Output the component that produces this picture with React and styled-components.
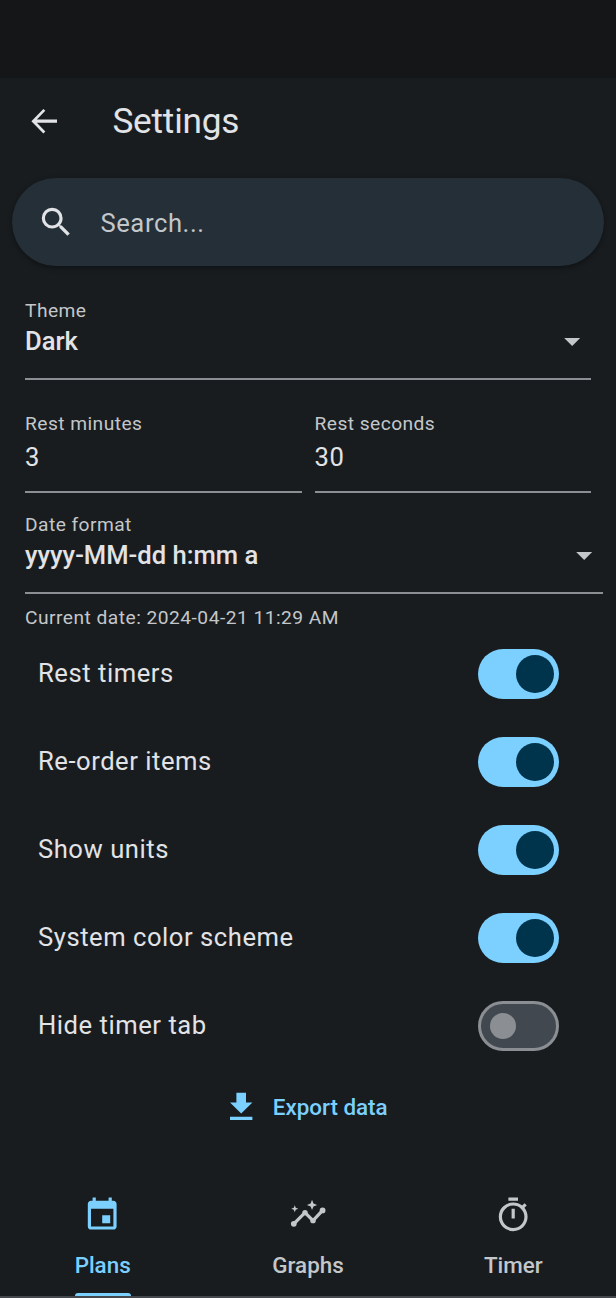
import React from 'react';
import styled, { createGlobalStyle } from 'styled-components';

const GlobalStyle = createGlobalStyle`
  html, body {
    margin: 0;
    background: #181c1f;
  }
  * {
    box-sizing: border-box;
  }
`;

const Icon = ({ d, size = 38.4, color = '#e2e3e6' }) => (
  <svg width={size} height={size} viewBox="0 0 24 24" fill={color} style={{ display: 'block', flexShrink: 0 }}>
    <path d={d} />
  </svg>
);

const paths = {
  back: 'M20 11H7.4l5.3-5.5-1.2-1.2L4 12l7.5 7.7 1.2-1.2L7.4 13H20z',
  search:
    'M9.5,3A6.5,6.5 0 0,1 16,9.5C16,11.11 15.41,12.59 14.44,13.73L14.71,14H15.5L20.5,19L19,20.5L14,15.5V14.71L13.73,14.44C12.59,15.41 11.11,16 9.5,16A6.5,6.5 0 0,1 3,9.5A6.5,6.5 0 0,1 9.5,3M9.5,5C7,5 5,7 5,9.5C5,12 7,14 9.5,14C12,14 14,12 14,9.5C14,7 12,5 9.5,5Z',
  menuDown: 'M7,10L12,15L17,10H7Z',
  download: 'M5,20H19V18H5M19,9H15V3H9V9H5L12,16L19,9Z',
  event:
    'M17 12h-5v5h5v-5zM16 1v2H8V1H6v2H5c-1.11 0-1.99.9-1.99 2L3 19c0 1.1.89 2 2 2h14c1.1 0 2-.9 2-2V5c0-1.1-.9-2-2-2h-1V1h-2zm3 18H5V8h14v11z',
  timer:
    'M12,20A7,7 0 0,1 5,13A7,7 0 0,1 12,6A7,7 0 0,1 19,13A7,7 0 0,1 12,20M19.03,7.39L20.45,5.97C20,5.46 19.55,5 19.04,4.56L17.62,6C16.07,4.74 14.12,4 12,4A9,9 0 0,0 3,13A9,9 0 0,0 12,22C17,22 21,17.97 21,13C21,10.88 20.26,8.93 19.03,7.39M11,14H13V8H11M15,1H9V3H15V1Z',
};

const GraphIcon = () => (
  <svg width="38.4" height="38.4" viewBox="0 0 24 24" style={{ display: 'block' }}>
    <polyline points="3,17.4 10,10.4 15,15.4 21,9" fill="none" stroke="#c4c7ca" strokeWidth="2" strokeLinejoin="round" />
    <circle cx="3" cy="17.4" r="1.8" fill="#c4c7ca" />
    <circle cx="10" cy="10.4" r="1.7" fill="#c4c7ca" />
    <circle cx="15" cy="15.4" r="1.7" fill="#c4c7ca" />
    <circle cx="21" cy="9" r="1.8" fill="#c4c7ca" />
    <path d="M14.4 2.4l.9 2.3 2.3.9-2.3.9-.9 2.3-.9-2.3-2.3-.9 2.3-.9z" fill="#c4c7ca" />
    <path d="M3.6 5.8l.6 1.6 1.6.6-1.6.6-.6 1.6-.6-1.6L1.4 8 3 7.4z" fill="#c4c7ca" />
  </svg>
);

const Page = styled.div`
  width: 616px;
  height: 1298px;
  display: flex;
  flex-direction: column;
  overflow: hidden;
  background: #181c1f;
  color: #e2e3e6;
  font-family: Roboto, 'Liberation Sans', sans-serif;
`;

const StatusBar = styled.div`
  height: 78px;
  flex-shrink: 0;
  background: #141618;
`;

const Header = styled.header`
  height: 86px;
  flex-shrink: 0;
  display: flex;
  align-items: center;
  padding-left: 25px;
`;

const Title = styled.h1`
  margin: 0 0 0 49px;
  font-size: 35.2px;
  font-weight: 400;
  line-height: 44px;
  letter-spacing: -0.2px;
  color: #e2e3e6;
`;

const SearchBar = styled.div`
  height: 88px;
  margin: 14px 12px 0;
  flex-shrink: 0;
  display: flex;
  align-items: center;
  padding-left: 25px;
  border-radius: 44px;
  background: #242f38;
  box-shadow: 0 2px 5px rgba(0, 0, 0, 0.35);
`;

const Placeholder = styled.span`
  margin: 2px 0 0 25px;
  font-size: 25.6px;
  letter-spacing: 0.6px;
  color: #c4c7ca;
`;

const Form = styled.div`
  padding: 0 13px 0 25px;
  display: flex;
  flex-direction: column;
`;

const FieldRow = styled.div`
  display: grid;
  grid-template-columns: 276.5px 276.5px;
  gap: 13px;
  margin-top: ${({ $top }) => $top}px;
`;

const Field = styled.div`
  height: ${({ $height }) => $height}px;
  margin-top: ${({ $top }) => $top || 0}px;
  margin-right: ${({ $inset }) => $inset || 0}px;
  display: flex;
  flex-direction: column;
  border-bottom: 2px solid #8b8f93;
`;

const Label = styled.label`
  font-size: 19.2px;
  line-height: 24px;
  letter-spacing: 0.45px;
  color: #c4c7ca;
`;

const SelectRow = styled.div`
  display: flex;
  align-items: center;
  justify-content: space-between;
  height: 36px;
`;

const SelectValue = styled.span`
  font-size: 25.6px;
  font-weight: 500;
  line-height: 36px;
  color: #e2e3e6;
`;

const InputValue = styled.span`
  font-size: 25.6px;
  line-height: 36px;
  margin-top: 3px;
  letter-spacing: 0.6px;
  color: #e2e3e6;
`;

const Hint = styled.p`
  margin: 12px 0 0;
  font-size: 19.2px;
  line-height: 24px;
  letter-spacing: 0.48px;
  color: #c4c7ca;
`;

const Toggles = styled.div`
  padding: 0 57px 0 38px;
  display: flex;
  flex-direction: column;
`;

const ToggleRow = styled.div`
  height: 88px;
  display: flex;
  align-items: center;
  justify-content: space-between;
`;

const ToggleLabel = styled.span`
  margin-bottom: 2px;
  font-size: 25.6px;
  letter-spacing: 0.54px;
  color: #e2e3e6;
`;

const Track = styled.div`
  width: 81px;
  height: 50px;
  padding: 0 ${({ $on }) => ($on ? '5px' : '0')} 0 ${({ $on }) => ($on ? '0' : '9px')};
  display: flex;
  align-items: center;
  justify-content: ${({ $on }) => ($on ? 'flex-end' : 'flex-start')};
  border-radius: 25px;
  background: ${({ $on }) => ($on ? '#7bd0ff' : '#41484f')};
  border: ${({ $on }) => ($on ? 'none' : '3px solid #8b8f93')};
`;

const Thumb = styled.div`
  width: ${({ $on }) => ($on ? 38 : 26)}px;
  height: ${({ $on }) => ($on ? 38 : 26)}px;
  border-radius: 50%;
  background: ${({ $on }) => ($on ? '#00344c' : '#8b8f93')};
`;

const ExportButton = styled.button`
  margin: 18px auto 0;
  padding: 0 6px 0 0;
  display: flex;
  align-items: center;
  gap: 12px;
  background: none;
  border: 0;
  font-family: inherit;
  font-size: 22.4px;
  font-weight: 500;
  color: #7bd0ff;
`;

const Nav = styled.nav`
  margin-top: auto;
  height: 118px;
  flex-shrink: 0;
  display: grid;
  grid-template-columns: repeat(3, 1fr);
  border-bottom: 2px solid #45484c;
`;

const NavItem = styled.div`
  position: relative;
  display: flex;
  flex-direction: column;
  align-items: center;
  padding-top: 16px;
  font-size: 22.4px;
  font-weight: 500;
  line-height: 28px;
  color: ${({ $active }) => ($active ? '#7bd0ff' : '#c4c7ca')};
`;

const NavLabel = styled.span`
  margin-top: 17px;
`;

const Indicator = styled.div`
  position: absolute;
  bottom: 0;
  left: 50%;
  width: 56px;
  height: 3px;
  margin-left: -28px;
  border-radius: 3px 3px 0 0;
  background: #7bd0ff;
`;

const toggles = [
  ['Rest timers', true],
  ['Re-order items', true],
  ['Show units', true],
  ['System color scheme', true],
  ['Hide timer tab', false],
];

export default function App() {
  return (
    <Page>
      <GlobalStyle />
      <StatusBar />
      <Header>
        <Icon d={paths.back} />
        <Title>Settings</Title>
      </Header>
      <SearchBar>
        <Icon d={paths.search} />
        <Placeholder>Search...</Placeholder>
      </SearchBar>
      <Form>
        <Field $top={33} $height={81} $inset={12}>
          <Label>Theme</Label>
          <SelectRow>
            <SelectValue>Dark</SelectValue>
            <Icon d={paths.menuDown} color="#c4c7ca" />
          </SelectRow>
        </Field>
        <FieldRow $top={32}>
          <Field $height={81}>
            <Label>Rest minutes</Label>
            <InputValue>3</InputValue>
          </Field>
          <Field $height={81}>
            <Label>Rest seconds</Label>
            <InputValue>30</InputValue>
          </Field>
        </FieldRow>
        <Field $top={20} $height={81}>
          <Label>Date format</Label>
          <SelectRow>
            <SelectValue>yyyy-MM-dd h:mm a</SelectValue>
            <Icon d={paths.menuDown} color="#c4c7ca" />
          </SelectRow>
        </Field>
        <Hint>Current date: 2024-04-21 11:29 AM</Hint>
      </Form>
      <Toggles>
        {toggles.map(([label, on]) => (
          <ToggleRow key={label}>
            <ToggleLabel>{label}</ToggleLabel>
            <Track $on={on}>
              <Thumb $on={on} />
            </Track>
          </ToggleRow>
        ))}
      </Toggles>
      <ExportButton>
        <Icon d={paths.download} color="#7bd0ff" />
        Export data
      </ExportButton>
      <Nav>
        <NavItem $active>
          <Icon d={paths.event} color="#7bd0ff" />
          <NavLabel>Plans</NavLabel>
          <Indicator />
        </NavItem>
        <NavItem>
          <GraphIcon />
          <NavLabel>Graphs</NavLabel>
        </NavItem>
        <NavItem>
          <Icon d={paths.timer} color="#c4c7ca" />
          <NavLabel>Timer</NavLabel>
        </NavItem>
      </Nav>
    </Page>
  );
}
